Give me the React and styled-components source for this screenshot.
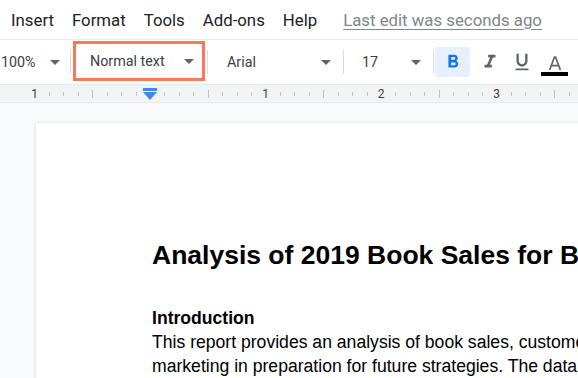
import React from 'react';
import styled, { createGlobalStyle } from 'styled-components';

const GlobalStyle = createGlobalStyle`
  body {
    margin: 0;
    overflow: hidden;
    background: #f8f9fa;
  }
`;

const Window = styled.div`
  width: 578px;
  height: 378px;
  overflow: hidden;
  display: flex;
  flex-direction: column;
  background: #f8f9fa;
  font-family: Roboto, 'Liberation Sans', sans-serif;
`;

const MenuBar = styled.div`
  flex: none;
  height: 40px;
  box-sizing: border-box;
  display: flex;
  align-items: center;
  gap: 18px;
  padding-left: 11px;
  background: #fff;
  border-bottom: 1px solid #e8eaed;
  font-size: 16.8px;
  color: #202124;
  white-space: nowrap;
`;

const MenuItem = styled.span``;

const LastEdit = styled.span`
  margin-left: 8px;
  color: #80868b;
  text-decoration: underline;
  text-underline-offset: 3px;
`;

const Toolbar = styled.div`
  flex: none;
  height: 45px;
  box-sizing: border-box;
  display: flex;
  align-items: center;
  background: #fff;
  border-bottom: 1px solid #e8eaed;
  font-size: 14.3px;
  color: #3c4043;
  white-space: nowrap;
`;

const Dropdown = styled.div`
  flex: none;
  box-sizing: border-box;
  width: ${p => p.$w}px;
  height: ${p => (p.$active ? 40 : 30)}px;
  display: flex;
  align-items: center;
  justify-content: space-between;
  padding: 0 ${p => p.$pr}px 0 ${p => p.$pl}px;
  margin-left: ${p => p.$ml || 0}px;
  border: ${p => (p.$active ? '3px solid #f47b55' : 'none')};
  margin-top: ${p => (p.$active ? -2 : 0)}px;
`;

const Caret = styled.span`
  width: 0;
  height: 0;
  border-left: 5px solid transparent;
  border-right: 5px solid transparent;
  border-top: 5px solid #5f6368;
`;

const Separator = styled.span`
  flex: none;
  width: 1px;
  height: 24px;
  margin-left: ${p => p.$ml || 0}px;
  background: #dadce0;
`;

const IconButton = styled.div`
  flex: none;
  width: ${p => p.$w || 32}px;
  height: 30px;
  margin-left: ${p => p.$ml || 0}px;
  display: flex;
  align-items: center;
  justify-content: center;
  border-radius: 4px;
  background: ${p => (p.$on ? '#e8f0fe' : 'transparent')};
  color: ${p => (p.$on ? '#1a73e8' : '#5f6368')};
`;

const Ruler = styled.div`
  flex: none;
  height: 17px;
  background: #f1f3f4;
  border-bottom: 1px solid #e8eaed;
`;

const Canvas = styled.div`
  flex: 1;
  padding: 20px 0 0 36px;
`;

const Page = styled.div`
  width: 816px;
  min-height: 400px;
  box-sizing: border-box;
  padding: 118px 0 0 116px;
  background: #fff;
  box-shadow: 0 0 3px rgba(60, 64, 67, 0.18);
  font-family: 'Liberation Sans', Arial, sans-serif;
  color: #000;
  white-space: nowrap;
`;

const Title = styled.h1`
  margin: 0 0 36px;
  font-size: 26.5px;
  line-height: 29px;
  font-weight: 700;
`;

const Heading = styled.h2`
  margin: 0;
  font-size: 17.6px;
  line-height: 24px;
  font-weight: 700;
`;

const Para = styled.p`
  margin: 0;
  font-size: 17.6px;
  line-height: 24px;
`;

const ZERO = 150;
const INCH = 115.5;

const RulerMarks = () => {
  const ticks = [];
  const labels = [];
  for (let i = -1; i <= 4; i++) {
    const base = ZERO + i * INCH;
    if (i !== 0) {
      labels.push(
        <text key={`n${i}`} x={base} y={13} fontSize="12" fill="#3c4043" textAnchor="middle" fontFamily="Roboto, sans-serif">
          {Math.abs(i)}
        </text>
      );
    }
    for (let k = 1; k < 8; k++) {
      const x = Math.round(base + (k / 8) * INCH) + 0.5;
      const half = k === 4;
      ticks.push(
        <line key={`t${i}-${k}`} x1={x} x2={x} y1={half ? 5 : 7} y2={half ? 13 : 11} stroke="#c0c4c8" strokeWidth="1" />
      );
    }
  }
  return (
    <svg width="578" height="17" viewBox="0 0 578 17">
      {ticks}
      {labels}
      <rect x="143" y="3" width="14" height="3" fill="#4285f4" />
      <path d="M143 7 H157 L150 15 Z" fill="#4285f4" />
    </svg>
  );
};

const Icon = ({ d, size = 22, fill = 'currentColor' }) => (
  <svg width={size} height={size} viewBox="0 0 24 24">
    <path d={d} fill={fill} />
  </svg>
);

const BOLD = 'M15.6 10.79c.97-.67 1.65-1.77 1.65-2.79 0-2.26-1.75-4-4-4H7v14h7.04c2.09 0 3.71-1.7 3.71-3.79 0-1.52-.86-2.82-2.15-3.42zM10 6.5h3c.83 0 1.5.67 1.5 1.5s-.67 1.5-1.5 1.5h-3v-3zm3.5 9H10v-3h3.5c.83 0 1.5.67 1.5 1.5s-.67 1.5-1.5 1.5z';
const ITALIC = 'M10 4v3h2.21l-3.42 8H6v3h8v-3h-2.21l3.42-8H18V4z';
const UNDERLINE = 'M12 17c3.31 0 6-2.69 6-6V3h-2.5v8c0 1.93-1.57 3.5-3.5 3.5S8.5 12.93 8.5 11V3H6v8c0 3.31 2.69 6 6 6zm-7 2v2h14v-2H5z';

const TextColorIcon = () => (
  <svg width="28" height="28" viewBox="0 0 28 28">
    <path d="M8.6 22 L13.5 9 H14.5 L19.4 22 M10.4 17.6 H17.6" fill="none" stroke="#5f6368" strokeWidth="1.7" />
    <rect x="0" y="24" width="27" height="4" fill="#000" />
  </svg>
);

const App = () => (
  <Window>
    <GlobalStyle />
    <MenuBar>
      <MenuItem>Insert</MenuItem>
      <MenuItem>Format</MenuItem>
      <MenuItem>Tools</MenuItem>
      <MenuItem>Add-ons</MenuItem>
      <MenuItem>Help</MenuItem>
      <LastEdit>Last edit was seconds ago</LastEdit>
    </MenuBar>

    <Toolbar>
      <Dropdown $w={70} $pl={1} $pr={10}>
        100%
        <Caret />
      </Dropdown>
      <Separator />
      <Dropdown $w={132} $pl={14} $pr={8} $ml={2} $active>
        Normal text
        <Caret />
      </Dropdown>
      <Separator $ml={2} />
      <Dropdown $w={135} $pl={19} $pr={12}>
        Arial
        <Caret />
      </Dropdown>
      <Separator />
      <Dropdown $w={89} $pl={18} $pr={12}>
        17
        <Caret />
      </Dropdown>
      <Separator />
      <IconButton $on $w={35} $ml={1}>
        <Icon d={BOLD} size={22} />
      </IconButton>
      <IconButton $ml={4}>
        <Icon d={ITALIC} size={22} />
      </IconButton>
      <IconButton>
        <Icon d={UNDERLINE} size={22} />
      </IconButton>
      <IconButton $w={34}>
        <TextColorIcon />
      </IconButton>
    </Toolbar>

    <Ruler>
      <RulerMarks />
    </Ruler>

    <Canvas>
      <Page>
        <Title>Analysis of 2019 Book Sales for Bookworm Books</Title>
        <Heading>Introduction</Heading>
        <Para>This report provides an analysis of book sales, customer demographics and</Para>
        <Para>marketing in preparation for future strategies. The data was collected</Para>
      </Page>
    </Canvas>
  </Window>
);

export default App;
